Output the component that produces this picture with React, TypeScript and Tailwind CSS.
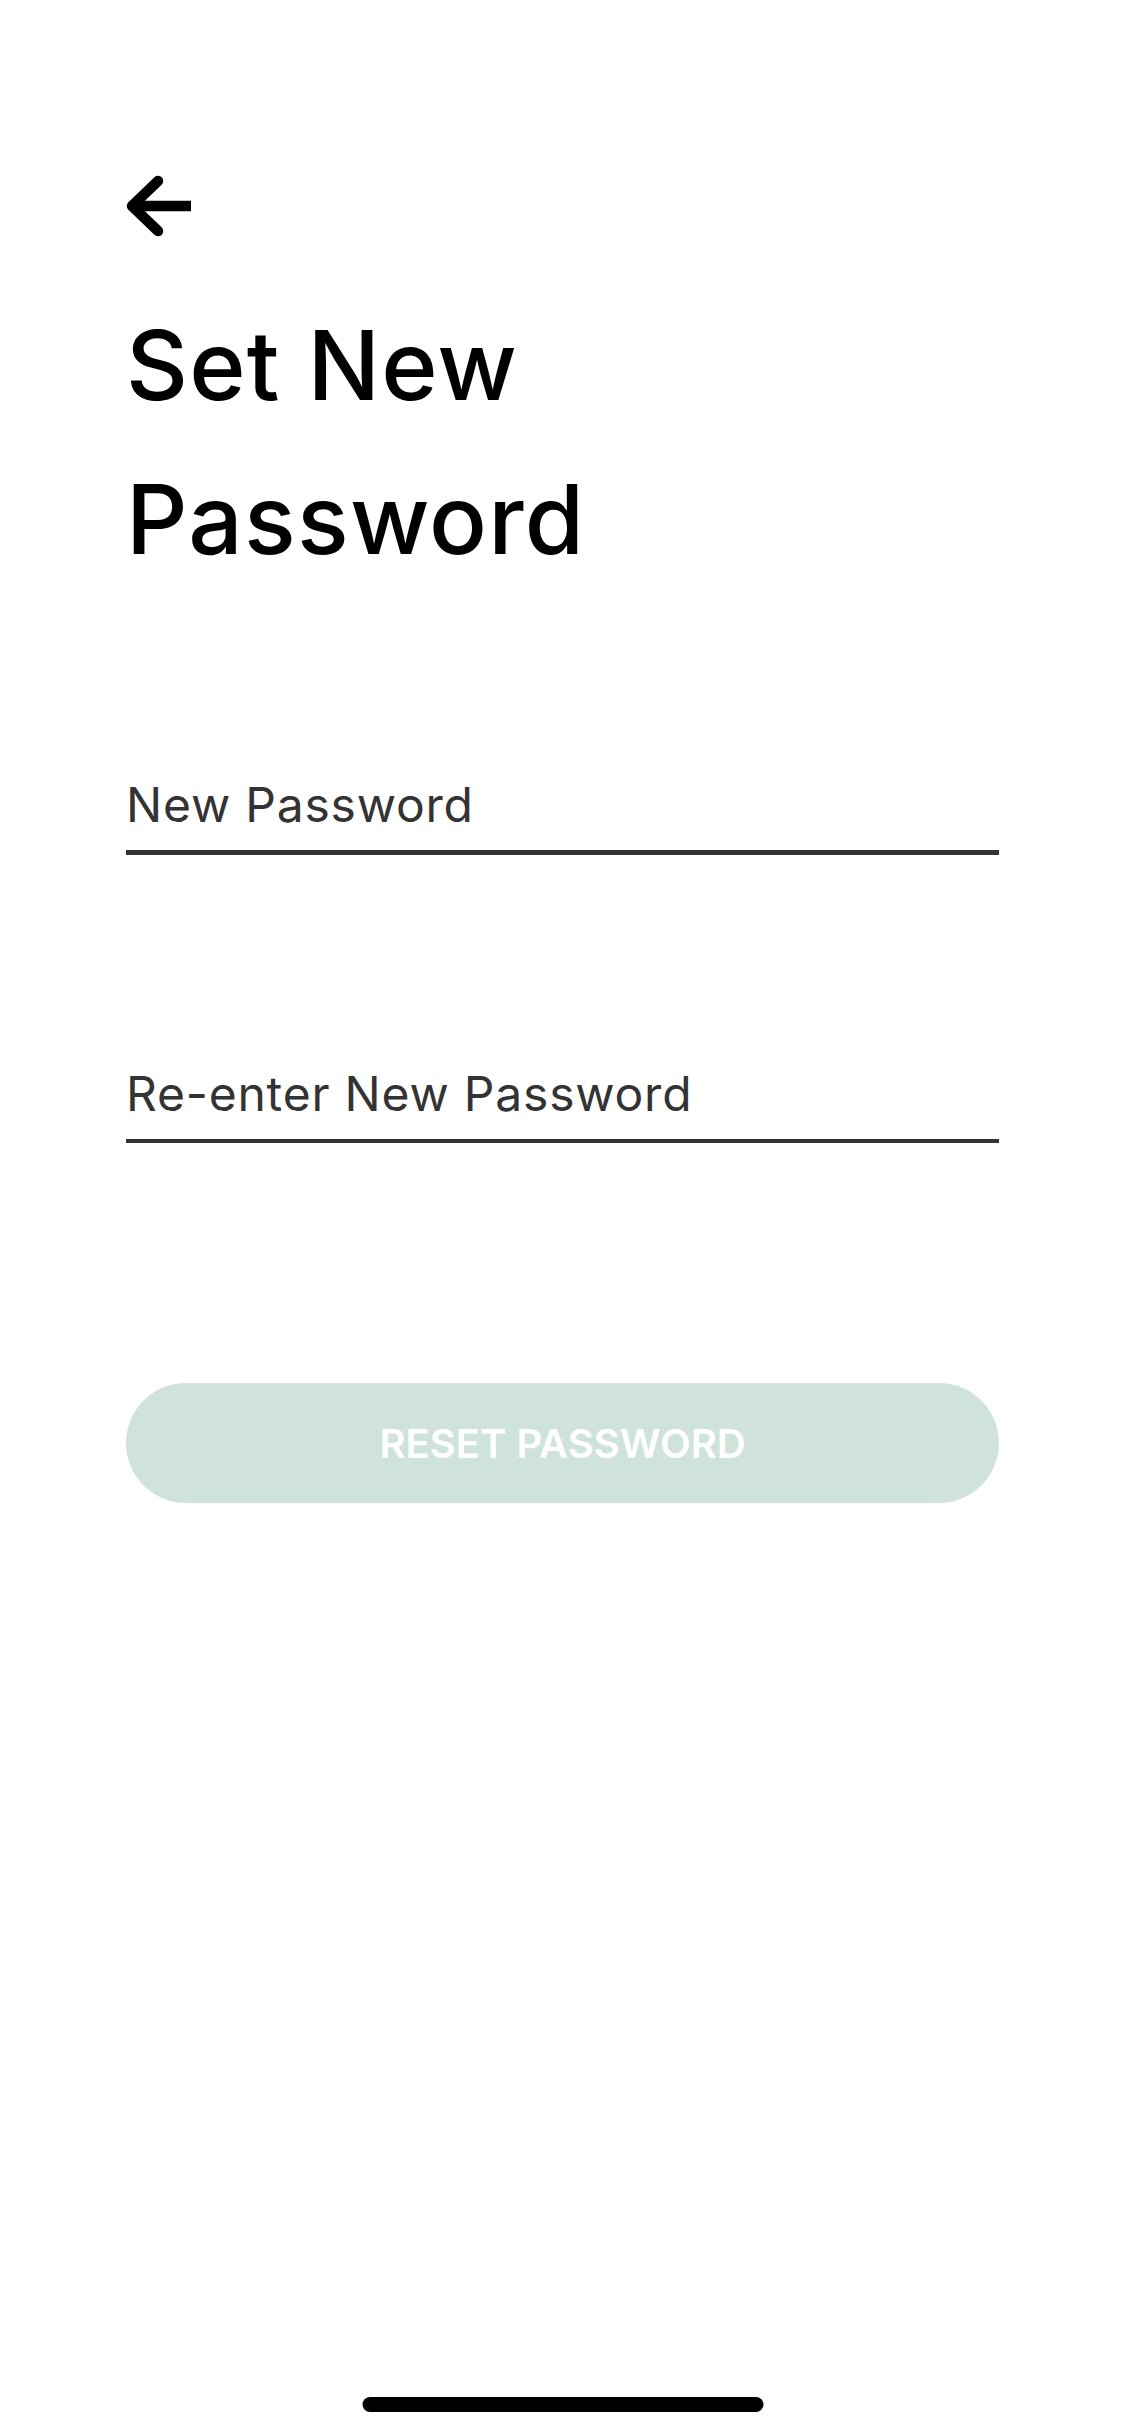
import React from "react";

export default function App() {
  return (
    <div
      className="relative min-h-[2436px] w-full bg-white"
      style={{ fontFamily: "Inter, 'Noto Sans', sans-serif" }}
    >
      <div className="flex flex-col px-[126px] pt-[175px]">
        <button className="flex h-[62px] w-[66px] items-center justify-start" aria-label="Back">
          <svg width="66" height="62" viewBox="0 0 66 62" fill="none">
            <path d="M8 31 H65" stroke="#000" strokeWidth="10.5" strokeLinecap="butt" />
            <path
              d="M32 6 L6 31 L32 56"
              stroke="#000"
              strokeWidth="10.5"
              strokeLinecap="round"
              strokeLinejoin="round"
            />
          </svg>
        </button>

        <h1 className="mt-[51px] text-[96px] leading-[154px] font-medium tracking-[1.2px] text-black">
          Set New
          <br />
          Password
        </h1>

        <div className="mt-[180px] flex flex-col">
          <label className="text-[48px] leading-[58px] font-normal text-[#333333] tracking-[0.8px]">
            New Password
          </label>
          <div className="mt-[16px] h-[4.5px] w-full bg-[#333333]" />
        </div>

        <div className="mt-[210px] flex flex-col">
          <label className="text-[48px] leading-[58px] font-normal text-[#333333] tracking-[0.8px]">
            Re-enter New Password
          </label>
          <div className="mt-[16px] h-[4.5px] w-full bg-[#333333]" />
        </div>

        <button className="mt-[240px] flex h-[120px] w-full items-center justify-center rounded-full bg-[#cfe3da]">
          <span className="pt-[2px] text-[40px] font-semibold leading-none text-white">RESET PASSWORD</span>
        </button>
      </div>

      <div className="absolute bottom-[24px] left-1/2 h-[15px] w-[401px] -translate-x-1/2 rounded-full bg-black" />
    </div>
  );
}
